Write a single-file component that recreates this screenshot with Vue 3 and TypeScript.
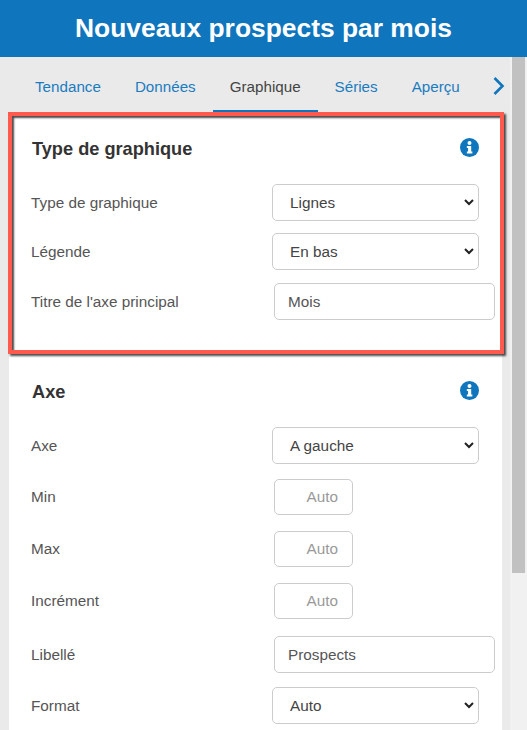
<script setup lang="ts">
const tabs = [
  { label: 'Tendance', active: false },
  { label: 'Données', active: false },
  { label: 'Graphique', active: true },
  { label: 'Séries', active: false },
  { label: 'Aperçu', active: false },
]
</script>

<template>
  <div class="page">
    <header class="title-bar">Nouveaux prospects par mois</header>

    <div class="body">
      <div class="content">
        <nav class="tabs">
          <a v-for="tab in tabs" :key="tab.label" class="tab" :class="{ active: tab.active }">{{ tab.label }}</a>
          <svg class="tab-next" width="14" height="20" viewBox="0 0 14 20">
            <path d="M2.5 2l8 8-8 8" fill="none" stroke="#0f75bc" stroke-width="2.6" />
          </svg>
        </nav>

        <section class="card first">
          <div class="highlight"></div>
          <div class="card-head">
            <h2>Type de graphique</h2>
            <svg class="info" width="19" height="19" viewBox="0 0 20 20">
              <circle cx="10" cy="10" r="10" fill="#0f75bc" />
              <circle cx="10" cy="5.2" r="2.1" fill="#fff" />
              <path d="M7.2 8.4h4.6v5.8h1.2v2.2H7.2v-2.2h1.3v-3.6H7.2z" fill="#fff" />
            </svg>
          </div>
          <div class="row r-first">
            <label>Type de graphique</label>
            <div class="select-wrap">
              <select class="ctl-select"><option>Lignes</option></select>
              <svg class="caret" width="10" height="7" viewBox="0 0 10 7"><path d="M1 1l4 4 4-4" fill="none" stroke="#222" stroke-width="2" /></svg>
            </div>
          </div>
          <div class="row r-tight">
            <label>Légende</label>
            <div class="select-wrap">
              <select class="ctl-select"><option>En bas</option></select>
              <svg class="caret" width="10" height="7" viewBox="0 0 10 7"><path d="M1 1l4 4 4-4" fill="none" stroke="#222" stroke-width="2" /></svg>
            </div>
          </div>
          <div class="row r-wide">
            <label>Titre de l'axe principal</label>
            <input class="ctl-text" value="Mois" />
          </div>
        </section>

        <section class="card second">
          <div class="card-head">
            <h2>Axe</h2>
            <svg class="info" width="19" height="19" viewBox="0 0 20 20">
              <circle cx="10" cy="10" r="10" fill="#0f75bc" />
              <circle cx="10" cy="5.2" r="2.1" fill="#fff" />
              <path d="M7.2 8.4h4.6v5.8h1.2v2.2H7.2v-2.2h1.3v-3.6H7.2z" fill="#fff" />
            </svg>
          </div>
          <div class="row r-first">
            <label>Axe</label>
            <div class="select-wrap">
              <select class="ctl-select"><option>A gauche</option></select>
              <svg class="caret" width="10" height="7" viewBox="0 0 10 7"><path d="M1 1l4 4 4-4" fill="none" stroke="#222" stroke-width="2" /></svg>
            </div>
          </div>
          <div class="row r-min">
            <label>Min</label>
            <input class="ctl-num" placeholder="Auto" />
          </div>
          <div class="row r-num">
            <label>Max</label>
            <input class="ctl-num" placeholder="Auto" />
          </div>
          <div class="row r-num">
            <label>Incrément</label>
            <input class="ctl-num" placeholder="Auto" />
          </div>
          <div class="row r-label">
            <label>Libellé</label>
            <input class="ctl-text" value="Prospects" />
          </div>
          <div class="row r-format">
            <label>Format</label>
            <div class="select-wrap">
              <select class="ctl-select"><option>Auto</option></select>
              <svg class="caret" width="10" height="7" viewBox="0 0 10 7"><path d="M1 1l4 4 4-4" fill="none" stroke="#222" stroke-width="2" /></svg>
            </div>
          </div>
        </section>
      </div>

      <div class="scrollbar"><div class="thumb"></div></div>
    </div>
  </div>
</template>

<style>
html,
body {
  margin: 0;
  overflow: hidden;
}
</style>

<style scoped>
.page {
  width: 527px;
  height: 730px;
  overflow: hidden;
  display: flex;
  flex-direction: column;
  font-family: "Liberation Sans", Arial, sans-serif;
  background: #eaeaea;
}

.title-bar {
  height: 57px;
  flex: none;
  background: #0f75bc;
  color: #fff;
  font-size: 26.4px;
  font-weight: bold;
  line-height: 57px;
  text-align: center;
}

.body {
  flex: 1;
  display: flex;
  min-height: 0;
}

.content {
  width: 502px;
  padding-left: 9px;
  box-sizing: border-box;
}

.scrollbar {
  width: 17px;
  margin-left: 8px;
  background: #f1f1f1;
}

.thumb {
  width: 13px;
  height: 516px;
  margin-left: 2px;
  background: #c1c1c1;
}

.tabs {
  height: 55px;
  padding-left: 9px;
  display: flex;
  align-items: flex-start;
}

.tab {
  flex: none;
  height: 56px;
  box-sizing: border-box;
  padding: 21px 17px 0;
  font-size: 15.2px;
  color: #1b7cc0;
  border-bottom: 3px solid transparent;
}

.tab.active {
  color: #444;
  border-bottom-color: #0f75bc;
}

.tab-next {
  flex: none;
  margin: 19px 0 0 15px;
}

.card {
  background: #fff;
  padding: 0 7px 0 22px;
}

.first {
  position: relative;
  height: 240px;
  padding-top: 22px;
  box-sizing: border-box;
}

.second {
  padding-top: 25px;
  height: 400px;
}

.highlight {
  position: absolute;
  left: -1px;
  top: 0;
  width: 496px;
  height: 242px;
  z-index: 1;
  box-sizing: border-box;
  border: 4px solid #ff5a4d;
  box-shadow: 2px 2px 2px rgba(0, 0, 0, 0.7), inset 2px 2px 2px rgba(0, 0, 0, 0.7);
  pointer-events: none;
}

.card-head {
  display: flex;
  justify-content: space-between;
  align-items: center;
  padding-left: 1px;
  padding-right: 16px;
  height: 30px;
}

.card-head h2 {
  margin: 0;
  font-size: 18.2px;
  font-weight: bold;
  color: #333;
}

.info {
  margin-bottom: 3px;
}

.row {
  display: flex;
  align-items: center;
}

.row label {
  width: 241px;
  flex: none;
  font-size: 15.3px;
  color: #555;
}

.r-first {
  margin-top: 20px;
}

.r-tight {
  margin-top: 12px;
}

.r-wide {
  margin-top: 13px;
}

.r-min {
  margin-top: 15px;
}

.r-num {
  margin-top: 16px;
}

.r-label {
  margin-top: 17px;
}

.r-format {
  margin-top: 14px;
}

.select-wrap {
  position: relative;
  width: 207px;
  height: 37px;
}

.caret {
  position: absolute;
  right: 5px;
  top: 15px;
  pointer-events: none;
}

.ctl-select {
  display: block;
  width: 207px;
  height: 37px;
  box-sizing: border-box;
  padding: 0 0 0 17px;
  border: 1px solid #ccc;
  border-radius: 5px;
  background: #fff;
  appearance: none;
  font: 15.3px "Liberation Sans", Arial, sans-serif;
  color: #444;
}

.ctl-text,
.ctl-num {
  margin-left: 2px;
  box-sizing: border-box;
  border: 1px solid #ccc;
  border-radius: 5px;
  font: 15.3px "Liberation Sans", Arial, sans-serif;
  color: #555;
  outline: none;
}

.ctl-text {
  width: 221px;
  height: 37px;
  padding: 0 13px;
}

.ctl-num {
  width: 79px;
  height: 36px;
  padding: 0 14px 0 13px;
  text-align: right;
}

.ctl-num::placeholder {
  color: #999;
}
</style>
